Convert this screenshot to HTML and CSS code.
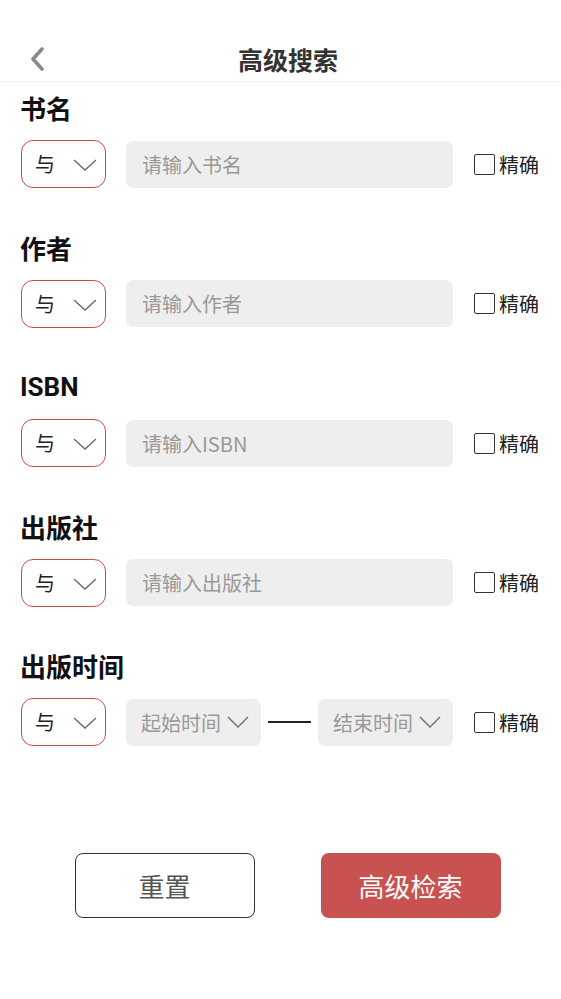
FILE: index.html
```html
<!DOCTYPE html>
<html lang="zh-CN">
<head>
<meta charset="utf-8">
<title>高级搜索</title>
<link rel="stylesheet" href="styles.css">
</head>
<body>
<header class="header">
  <div class="back">
    <svg width="16" height="24" viewBox="0 0 16 24"><path d="M13 2 L4 12 L13 22" fill="none" stroke="#8a8a8a" stroke-width="3.6" stroke-linecap="round" stroke-linejoin="round"/></svg>
  </div>
  <h1 class="title">高级搜索</h1>
  <div class="spacer"></div>
</header>
<main class="form">
  <section class="field">
    <h2 class="label">书名</h2>
    <div class="row">
      <div class="logic"><span>与</span><svg class="chev" width="24" height="12" viewBox="0 0 24 12"><path d="M1 1 L12 11 L23 1" fill="none" stroke="#666" stroke-width="1.3"/></svg></div>
      <div class="input">请输入书名</div>
      <label class="exact"><span class="box"></span>精确</label>
    </div>
  </section>
  <section class="field">
    <h2 class="label">作者</h2>
    <div class="row">
      <div class="logic"><span>与</span><svg class="chev" width="24" height="12" viewBox="0 0 24 12"><path d="M1 1 L12 11 L23 1" fill="none" stroke="#666" stroke-width="1.3"/></svg></div>
      <div class="input">请输入作者</div>
      <label class="exact"><span class="box"></span>精确</label>
    </div>
  </section>
  <section class="field">
    <h2 class="label latin">ISBN</h2>
    <div class="row">
      <div class="logic"><span>与</span><svg class="chev" width="24" height="12" viewBox="0 0 24 12"><path d="M1 1 L12 11 L23 1" fill="none" stroke="#666" stroke-width="1.3"/></svg></div>
      <div class="input">请输入ISBN</div>
      <label class="exact"><span class="box"></span>精确</label>
    </div>
  </section>
  <section class="field">
    <h2 class="label">出版社</h2>
    <div class="row">
      <div class="logic"><span>与</span><svg class="chev" width="24" height="12" viewBox="0 0 24 12"><path d="M1 1 L12 11 L23 1" fill="none" stroke="#666" stroke-width="1.3"/></svg></div>
      <div class="input">请输入出版社</div>
      <label class="exact"><span class="box"></span>精确</label>
    </div>
  </section>
  <section class="field">
    <h2 class="label">出版时间</h2>
    <div class="row">
      <div class="logic"><span>与</span><svg class="chev" width="24" height="12" viewBox="0 0 24 12"><path d="M1 1 L12 11 L23 1" fill="none" stroke="#666" stroke-width="1.3"/></svg></div>
      <div class="range">
        <div class="date">起始时间<svg width="22" height="12" viewBox="0 0 22 12"><path d="M1 1 L11 11 L21 1" fill="none" stroke="#777" stroke-width="1.5"/></svg></div>
        <span class="dash"></span>
        <div class="date">结束时间<svg width="22" height="12" viewBox="0 0 22 12"><path d="M1 1 L11 11 L21 1" fill="none" stroke="#777" stroke-width="1.5"/></svg></div>
      </div>
      <label class="exact"><span class="box"></span>精确</label>
    </div>
  </section>
</main>
<footer class="actions">
  <button class="btn reset">重置</button>
  <button class="btn search">高级检索</button>
</footer>
</body>
</html>
```
FILE: styles.css
```css
* { box-sizing: border-box; }
html, body { margin: 0; padding: 0; background: #fff; }
body {
  width: 561px;
  font-family: "Noto Sans CJK SC", Roboto, "Noto Sans", sans-serif;
  color: #222;
}
.header {
  display: flex;
  align-items: center;
  height: 82px;
  padding-top: 37px;
  border-bottom: 1px solid #f1f1f1;
}
.back {
  width: 60px;
  padding-left: 29px;
  display: flex;
  align-items: center;
  height: 43px;
}
.title {
  flex: 1;
  margin: 0;
  text-align: center;
  font-size: 25px;
  font-weight: 700;
  color: #333;
  line-height: 43px;
}
.spacer { width: 45px; }
.form {
  padding: 8px 0 0 20px;
}
.field + .field { margin-top: 41.5px; }
.label {
  margin: 0;
  font-size: 26px;
  font-weight: 700;
  line-height: 36px;
  color: #111;
}
.label.latin { font-family: Roboto, "Noto Sans CJK SC", sans-serif; font-size: 26px; }
.row {
  display: flex;
  align-items: center;
  margin-top: 14px;
  height: 48px;
  padding-left: 1px;
}
.logic {
  width: 85px;
  height: 48px;
  border: 1.5px solid #c94b4b;
  border-radius: 12px;
  display: flex;
  align-items: center;
  justify-content: space-between;
  padding: 0 8px 0 13px;
  font-size: 20px;
  color: #222;
  flex: none;
}
.logic span { line-height: 1; }
.chev { margin-top: 2px; }
.input {
  width: 327px;
  height: 47px;
  margin-left: 20px;
  background: #eeeeee;
  border-radius: 7px;
  padding-left: 16px;
  display: flex;
  align-items: center;
  font-size: 20px;
  color: #999;
  flex: none;
}
.range {
  width: 327px;
  margin-left: 20px;
  display: flex;
  align-items: center;
  justify-content: space-between;
  flex: none;
}
.date {
  width: 135px;
  height: 47px;
  background: #eeeeee;
  border-radius: 7px;
  display: flex;
  align-items: center;
  padding-left: 15px;
  gap: 6px;
  font-size: 20px;
  color: #999;
}
.dash {
  width: 43px;
  height: 1.5px;
  background: #222;
}
.exact {
  display: flex;
  align-items: center;
  margin-left: 21px;
  font-size: 20px;
  color: #222;
}
.box {
  width: 21px;
  height: 21px;
  border: 1px solid #333;
  border-radius: 2px;
  margin-right: 4px;
}
.actions {
  display: flex;
  justify-content: center;
  gap: 66px;
  margin-top: 107px;
  padding-left: 14px;
}
.btn {
  width: 180px;
  height: 65px;
  border-radius: 8px;
  font-family: "Noto Sans CJK SC", sans-serif;
  font-size: 26px;
  padding: 0;
  cursor: pointer;
}
.reset {
  background: #fff;
  border: 1px solid #333;
  color: #555;
}
.search {
  background: #c85250;
  border: none;
  color: #fff;
}
```
